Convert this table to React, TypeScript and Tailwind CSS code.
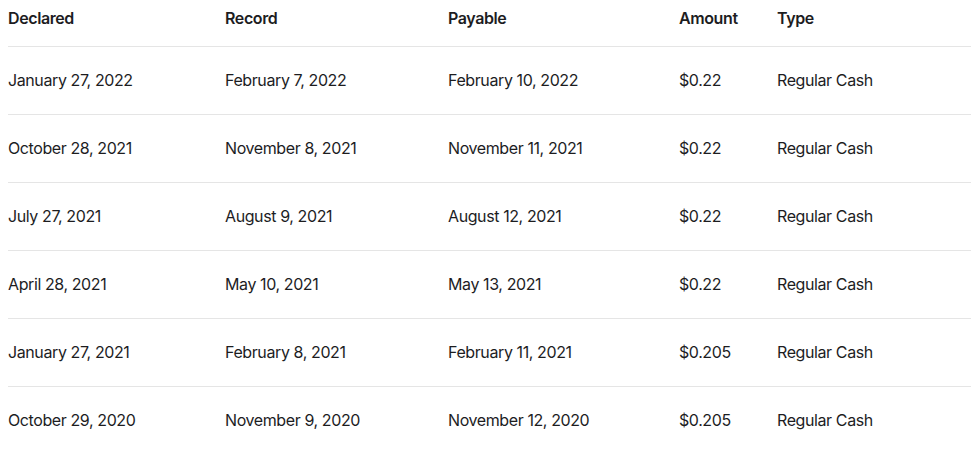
const rows = [
  ["January 27, 2022", "February 7, 2022", "February 10, 2022", "$0.22", "Regular Cash"],
  ["October 28, 2021", "November 8, 2021", "November 11, 2021", "$0.22", "Regular Cash"],
  ["July 27, 2021", "August 9, 2021", "August 12, 2021", "$0.22", "Regular Cash"],
  ["April 28, 2021", "May 10, 2021", "May 13, 2021", "$0.22", "Regular Cash"],
  ["January 27, 2021", "February 8, 2021", "February 11, 2021", "$0.205", "Regular Cash"],
  ["October 29, 2020", "November 9, 2020", "November 12, 2020", "$0.205", "Regular Cash"],
];

const widths = ["w-[217px]", "w-[223px]", "w-[231px]", "w-[98px]", ""];
const headers = ["Declared", "Record", "Payable", "Amount", "Type"];

export default function App() {
  return (
    <div className="w-full h-[452px] bg-white pl-2 font-['Inter',sans-serif] text-[#1d1d1f] text-base tracking-tight">
      <table className="w-full border-collapse table-fixed">
        <thead>
          <tr className="border-b border-[#e5e5e5]">
            {headers.map((h, i) => (
              <th key={h} className={`${widths[i]} text-left font-semibold leading-6 pt-[6px] pb-4`}>
                {h}
              </th>
            ))}
          </tr>
        </thead>
        <tbody>
          {rows.map((r, ri) => (
            <tr key={ri} className="border-b border-[#e5e5e5]">
              {r.map((c, ci) => (
                <td key={ci} className="h-[68px] leading-6 align-middle pb-[2px]">
                  {c}
                </td>
              ))}
            </tr>
          ))}
        </tbody>
      </table>
    </div>
  );
}
